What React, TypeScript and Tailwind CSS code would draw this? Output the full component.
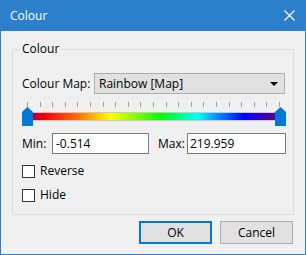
import React from 'react';

const font = { fontFamily: '"Open Sans", "Noto Sans", sans-serif' };

function Thumb() {
  return (
    <svg width="11" height="19" viewBox="0 0 11 19" className="shrink-0">
      <path d="M0 5 L5.5 0 L11 5 V19 H0 Z" fill="#0078d7" />
    </svg>
  );
}

function Checkbox({ label }: { label: string }) {
  return (
    <label className="flex items-center h-[24px]">
      <span className="w-[13px] h-[13px] border border-[#333333] bg-white shrink-0" />
      <span className="ml-[5px]">{label}</span>
    </label>
  );
}

export default function App() {
  const ticks = Array.from({ length: 21 });

  return (
    <div
      className="w-[306px] h-[255px] bg-[#f0f0f0] border-x border-b border-[#2b7fcb] flex flex-col text-[12px] text-black leading-[16px]"
      style={font}
    >
      {/* Title bar */}
      <div className="h-[31px] bg-[#2b7fcb] flex items-center justify-between pl-[9px] pr-[10px] text-white shrink-0">
        <span>Colour</span>
        <svg width="11" height="11" viewBox="0 0 11 11" fill="none" stroke="white" strokeWidth="1.2">
          <path d="M0.5 0.5 L10.5 10.5 M10.5 0.5 L0.5 10.5" />
        </svg>
      </div>

      {/* Group */}
      <fieldset className="mx-[11px] mt-[10px] border border-[#dcdcdc] pl-[9px] pr-[8px] pb-[7px]">
        <legend className="px-[2px] -ml-[2px]">Colour</legend>

        <div className="flex items-center mt-[16px]">
          <span className="w-[72px]">Colour Map:</span>
          <div className="flex-1 h-[21px] bg-[#e1e1e1] border border-[#adadad] flex items-center justify-between pl-[4px] pr-[6px]">
            <span>Rainbow [Map]</span>
            <svg width="8" height="4" viewBox="0 0 8 4">
              <path d="M0 0 H8 L4 4 Z" fill="#000" />
            </svg>
          </div>
        </div>

        {/* Slider */}
        <div className="mt-[8px] -mr-[1px] flex flex-col">
          <div className="flex justify-between h-[5px] pl-[5px] pr-[6px]">
            {ticks.map((_, i) => (
              <span key={i} className="w-px h-[5px] bg-[#a0a0a0]" />
            ))}
          </div>
          <div className="flex">
            <Thumb />
            <div className="flex-1 mt-[5px] h-[9px] border-y border-[#c8c8c8] bg-[linear-gradient(to_right,#b0003c_0%,#ff0000_5%,#ff8000_20%,#ffff00_32%,#00ff00_53%,#00ffff_68%,#0000ff_87%,#5a0090_100%)]" />
            <Thumb />
          </div>
        </div>

        {/* Min / Max */}
        <div className="flex items-center mt-[7px] -mr-[1px]">
          <span className="w-[30px]">Min:</span>
          <div className="w-[97px] h-[21px] bg-white border border-[#7a7a7a] flex items-center pl-[3px]">-0.514</div>
          <span className="ml-[9px] w-[29px]">Max:</span>
          <div className="flex-1 h-[21px] bg-white border border-[#7a7a7a] flex items-center pl-[2px]">219.959</div>
        </div>

        <div className="mt-[5px] flex flex-col">
          <Checkbox label="Reverse" />
          <Checkbox label="Hide" />
        </div>
      </fieldset>

      {/* Buttons */}
      <div className="flex justify-end gap-[8px] mt-[6px] pr-[12px]">
        <button className="w-[73px] h-[23px] bg-[#e1e1e1] border-2 border-[#0078d7]">OK</button>
        <button className="w-[73px] h-[23px] bg-[#e1e1e1] border border-[#adadad]">Cancel</button>
      </div>
    </div>
  );
}
